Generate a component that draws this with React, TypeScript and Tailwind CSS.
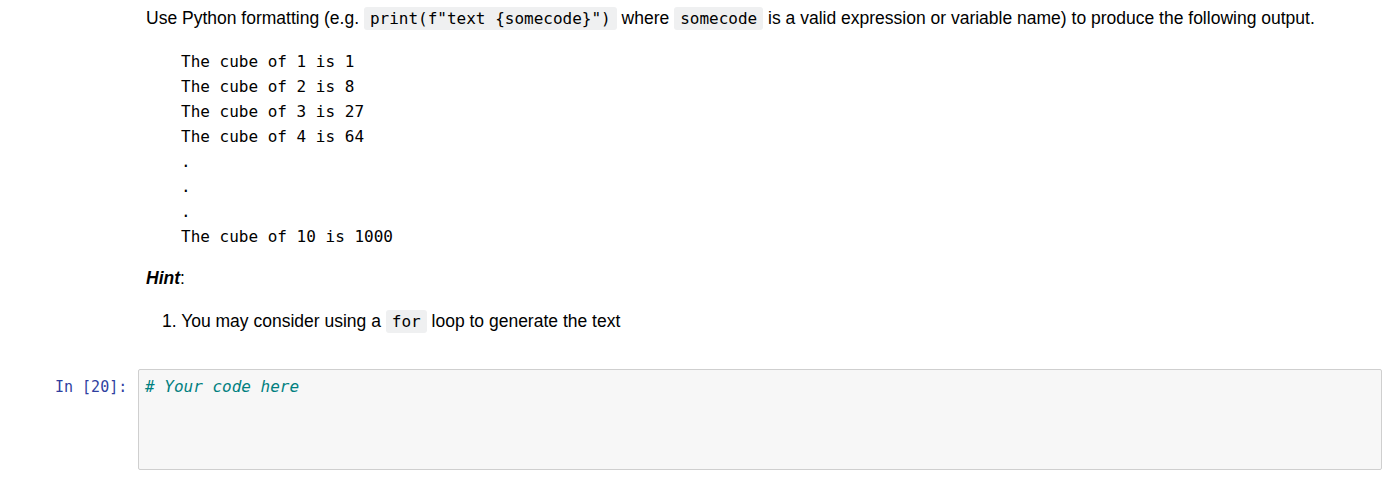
export default function App() {
  const lines = [
    "The cube of 1 is 1",
    "The cube of 2 is 8",
    "The cube of 3 is 27",
    "The cube of 4 is 64",
    ".",
    ".",
    ".",
    "The cube of 10 is 1000",
  ];
  const code = "font-['DejaVu_Sans_Mono',monospace] text-[16px] bg-[#eff0f1] px-[6px] py-[2px] rounded-[3px]";
  return (
    <div className="w-[1398px] h-[487px] bg-white text-black font-['Liberation_Sans',Arial,sans-serif] text-[17.5px] overflow-hidden">
      <div className="pl-[146px] pr-[16px] pt-[5px]">
        <p className="leading-[26px]">
          Use Python formatting (e.g. <code className={code}>print(f"text {"{somecode}"}")</code> where{" "}
          <code className={code}>somecode</code> is a valid expression or variable name) to produce the following output.
        </p>
        <pre className="mt-[17px] ml-[35px] font-['DejaVu_Sans_Mono',monospace] text-[16px] leading-[25px]">
          {lines.join("\n")}
        </pre>
        <p className="mt-[16px] leading-[26px]">
          <em className="font-bold">Hint</em>:
        </p>
        <ol className="mt-[17px] ml-[16px] leading-[26px]">
          <li>
            1. You may consider using a <code className={code}>for</code> loop to generate the text
          </li>
        </ol>
      </div>
      <div className="flex mt-[34px] pl-[55px] pr-[16px]">
        <div className="w-[83px] pt-[6px] font-['DejaVu_Sans_Mono',monospace] text-[15px] text-[#303f9f] leading-[25px]">
          In [20]:
        </div>
        <div className="flex-1 h-[101px] bg-[#f7f7f7] border border-[#cfcfcf] rounded-[2px] px-[6px] pt-[3px]">
          <span className="font-['DejaVu_Sans_Mono',monospace] text-[16px] italic text-[#008080] leading-[25px]">
            # Your code here
          </span>
        </div>
      </div>
    </div>
  );
}
